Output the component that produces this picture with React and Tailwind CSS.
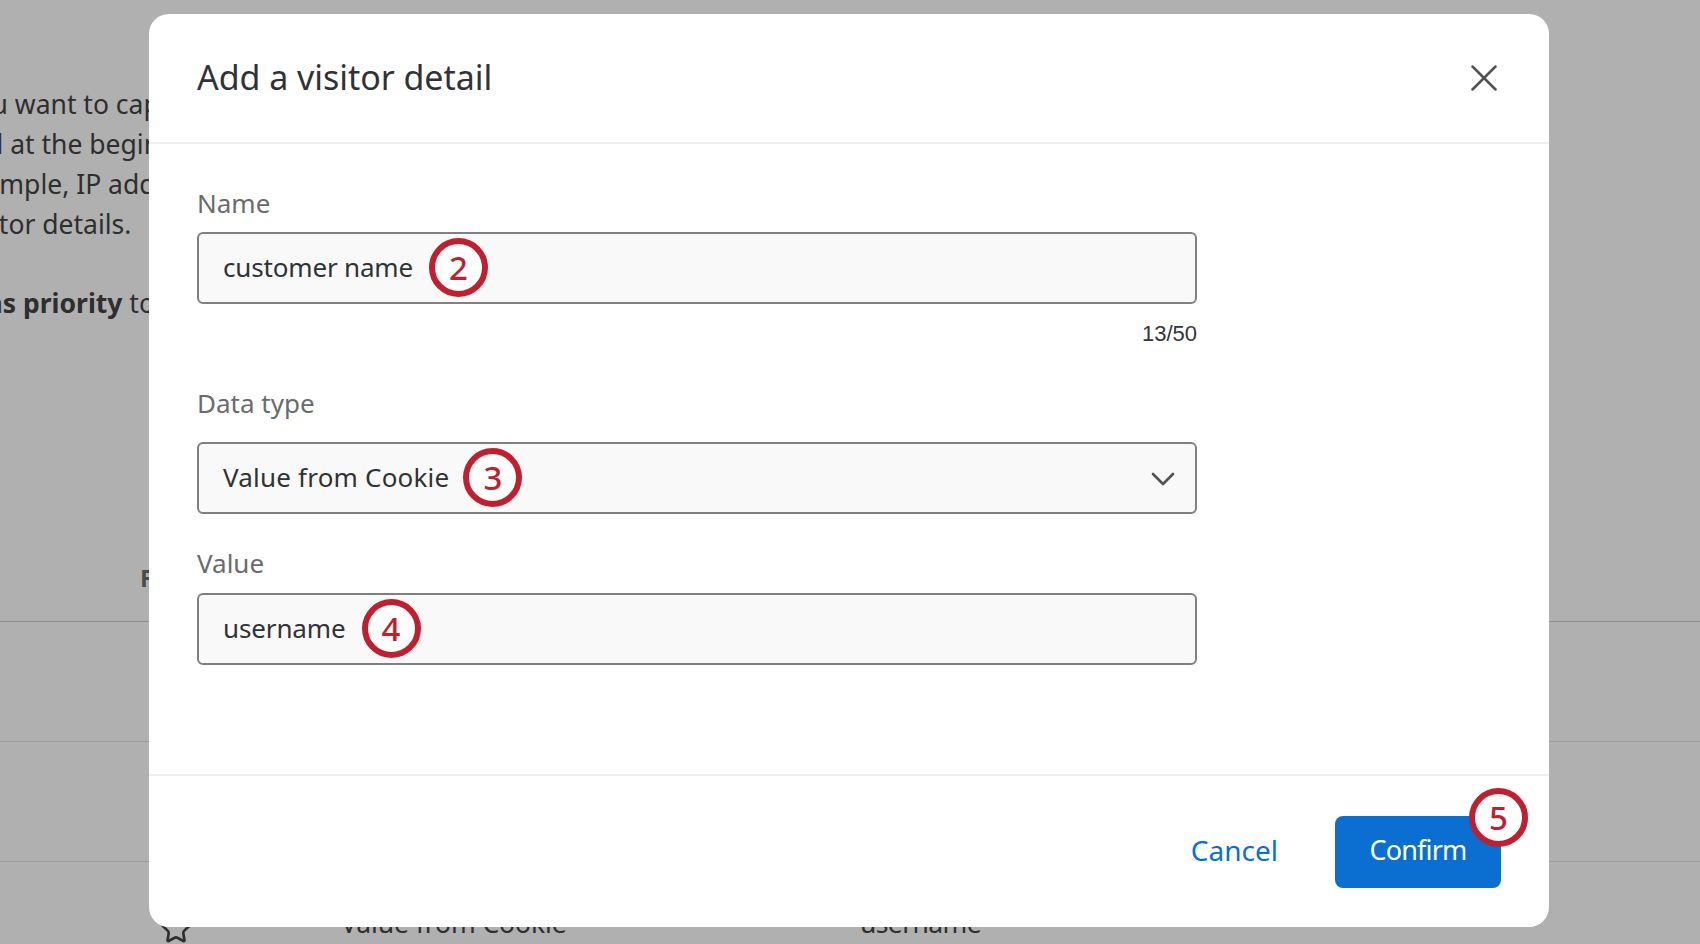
import React from "react";
import { X, ChevronDown, Star } from "lucide-react";

const font = "font-['Noto_Sans','Open_Sans',sans-serif]";

function Badge({ n, className = "" }) {
  return (
    <span className={`flex h-[59px] w-[59px] shrink-0 items-center justify-center rounded-full border-[6px] border-[#c01f2f] bg-white text-[33px] font-medium leading-none text-[#c01f2f] ${className}`}>
      {n}
    </span>
  );
}

function Field({ value, n, chevron = false, className = "", textClass = "", badgeClass = "ml-[16px]" }) {
  return (
    <div className={`flex h-[72px] w-[1000px] items-center rounded-[6px] border-2 border-[#808080] bg-[#f9f9f9] pb-[2px] pl-[24px] pr-[12px] text-[26px] text-[#2f3337] ${className}`}>
      <span className={`whitespace-nowrap ${textClass}`}>{value}</span>
      <Badge n={n} className={badgeClass} />
      {chevron && <ChevronDown className="ml-auto mt-[4px] h-[40px] w-[40px] text-[#525252]" strokeWidth={1.6} />}
    </div>
  );
}

export default function App() {
  return (
    <div className={`relative h-[944px] w-[1700px] overflow-hidden bg-[#b0b0b0] ${font}`}>
      <div className="flex flex-col pt-[84px] text-[26.5px] leading-[40px] text-[#2e2e2e]">
        <p className="-ml-[38px] whitespace-nowrap">you want to capture</p>
        <p className="-ml-[13px] whitespace-nowrap">d at the beginning</p>
        <p className="-ml-[44px] whitespace-nowrap">example, IP address</p>
        <p className="-ml-[41px] whitespace-nowrap">visitor details.</p>
        <p className="mt-[39px] -ml-[31px] whitespace-nowrap"><b className="font-bold">ons priority</b> to</p>
        <p className="mt-[237px] ml-[140px] text-[24px] font-bold leading-[36px] text-[#4a4a4a]">Field</p>
        <div className="mt-[25px] h-[1px] bg-[#8f8f8f]" />
        <div className="h-[120px] border-b border-[#9b9b9b]" />
        <div className="h-[120px] border-b border-[#9b9b9b]" />
        <div className="mt-[41px] flex items-start pl-[160px] text-[#2e2e2e]">
          <Star className="mt-[10px] h-[32px] w-[32px]" strokeWidth={2} />
          <span className="ml-[149px] w-[519px] tracking-[-0.1px]">Value from Cookie</span>
          <span className="tracking-[-0.6px]">username</span>
        </div>
      </div>

      <div className="absolute left-[149px] top-[14px] flex h-[913px] w-[1400px] flex-col rounded-[20px] bg-white">
        <header className="flex h-[130px] shrink-0 items-center justify-between border-b-2 border-[#efefef] pl-[48px] pr-[42px]">
          <h1 className="-mt-[2px] text-[34px] font-normal leading-none tracking-[-0.05px] text-[#2f3337]">Add a visitor detail</h1>
          <X className="h-[46px] w-[46px] text-[#525252]" strokeWidth={1.3} />
        </header>

        <div className="flex-1 pl-[48px] pt-[41px]">
          <label className="block text-[26px] leading-[36px] text-[#6b6b6b]">Name</label>
          <Field value="customer name" n="2" className="mt-[11px]" textClass="tracking-[-0.17px]" />
          <p className="mt-[16px] w-[1000px] text-right font-['Liberation_Sans',sans-serif] text-[22px] leading-[28px] text-[#32363a]">13/50</p>
          <label className="mt-[37px] block text-[26px] leading-[36px] text-[#6b6b6b]">Data type</label>
          <Field value="Value from Cookie" n="3" chevron className="mt-[21px]" textClass="tracking-[0.2px]" badgeClass="ml-[14px]" />
          <label className="mt-[31px] block text-[26px] leading-[36px] text-[#6b6b6b]">Value</label>
          <Field value="username" n="4" className="mt-[12px]" textClass="tracking-[-0.13px]" />
        </div>

        <footer className="relative flex h-[153px] shrink-0 items-start justify-end border-t-2 border-[#efefef] pr-[48px] pt-[40px]">
          <button className="mr-[57px] h-[72px] pb-[4px] text-[28px] text-[#0b6ed0]">Cancel</button>
          <button className="h-[72px] w-[166px] rounded-[8px] bg-[#0b6fd1] pb-[4px] text-[27px] tracking-[-0.8px] text-white">Confirm</button>
          <Badge n="5" className="absolute right-[21px] top-[12px]" />
        </footer>
      </div>
    </div>
  );
}
